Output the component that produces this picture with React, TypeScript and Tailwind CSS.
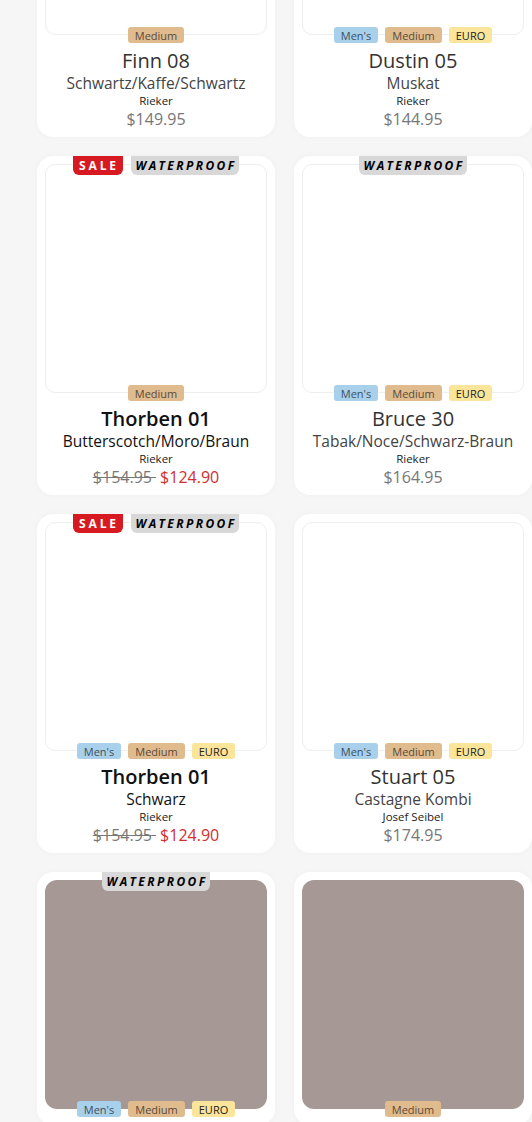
type Tag = "mens" | "medium" | "euro";

type Product = {
  name: string;
  color: string;
  brand: string;
  price: string;
  salePrice?: string;
  tags: Tag[];
  sale?: boolean;
  waterproof?: boolean;
  placeholder?: boolean;
  dark?: boolean;
};

const products: Product[] = [
  { name: "Finn 08", color: "Schwartz/Kaffe/Schwartz", brand: "Rieker", price: "$149.95", tags: ["medium"] },
  { name: "Dustin 05", color: "Muskat", brand: "Rieker", price: "$144.95", tags: ["mens", "medium", "euro"] },
  {
    name: "Thorben 01",
    color: "Butterscotch/Moro/Braun",
    brand: "Rieker",
    price: "$154.95",
    salePrice: "$124.90",
    tags: ["medium"],
    sale: true,
    waterproof: true,
    dark: true,
  },
  { name: "Bruce 30", color: "Tabak/Noce/Schwarz-Braun", brand: "Rieker", price: "$164.95", tags: ["mens", "medium", "euro"], waterproof: true },
  {
    name: "Thorben 01",
    color: "Schwarz",
    brand: "Rieker",
    price: "$154.95",
    salePrice: "$124.90",
    tags: ["mens", "medium", "euro"],
    sale: true,
    waterproof: true,
    dark: true,
  },
  { name: "Stuart 05", color: "Castagne Kombi", brand: "Josef Seibel", price: "$174.95", tags: ["mens", "medium", "euro"] },
  { name: "", color: "", brand: "", price: "", tags: ["mens", "medium", "euro"], waterproof: true, placeholder: true },
  { name: "", color: "", brand: "", price: "", tags: ["medium"], placeholder: true },
];

const tagStyles: Record<Tag, { label: string; cls: string }> = {
  mens: { label: "Men's", cls: "bg-[#a9d0ea] text-[#3d4f5e]" },
  medium: { label: "Medium", cls: "bg-[#e0bb8e] text-[#5a4a3a]" },
  euro: { label: "EURO", cls: "bg-[#fbe59a] text-[#222]" },
};

const ProductCard = ({ p }: { p: Product }) => {
  return (
    <div className="relative bg-white rounded-[16px] p-2 shadow-[0_0_6px_rgba(0,0,0,0.03)] text-center">
      {(p.sale || p.waterproof) && (
        <div className="absolute top-0 left-0 right-0 flex justify-center gap-2 z-10">
          {p.sale && (
            <span className="h-[19px] w-[50px] flex items-center justify-center bg-[#d71a21] text-white text-[12px] font-bold tracking-[0.24em] rounded-b-md pl-[2px]">
              SALE
            </span>
          )}
          {p.waterproof && (
            <span className="h-[19px] w-[108px] flex items-center justify-center bg-[#d8d8d8] text-black text-[12px] font-bold italic tracking-[0.2em] rounded-b-md pl-[2px]">
              WATERPROOF
            </span>
          )}
        </div>
      )}
      {p.placeholder ? (
        <div className="h-[229px] rounded-[12px] bg-[#a69894]" />
      ) : (
        <div className="h-[229px] rounded-[10px] border border-[#eeeeee] bg-white" />
      )}
      <div className="relative -mt-2 flex justify-center gap-[7px]">
        {p.tags.map((t) => (
          <span
            key={t}
            className={`h-4 px-[7px] rounded-[3px] flex items-center text-[11px] leading-none ${tagStyles[t].cls}`}
          >
            {tagStyles[t].label}
          </span>
        ))}
      </div>
      {!p.placeholder && (
        <>
          <div
            className={`mt-[6px] text-[20px] leading-6 ${p.dark ? "text-[#111] font-semibold" : "text-[#333] font-medium"}`}
          >
            {p.name}
          </div>
          <div className={`text-[15.5px] leading-5 ${p.dark ? "text-[#111]" : "text-[#444]"}`}>{p.color}</div>
          <div className="text-[11.5px] leading-[15px] text-[#222]">{p.brand}</div>
          <div className="mt-px text-[16px] leading-5 font-medium">
            {p.salePrice ? (
              <>
                <span className="text-[#777] line-through">{p.price} </span>
                <span className="text-[#d12f2f] ml-[4px]">{p.salePrice}</span>
              </>
            ) : (
              <span className="text-[#777]">{p.price}</span>
            )}
          </div>
        </>
      )}
    </div>
  );
};

export default function App() {
  return (
    <div className="w-[532px] h-[1122px] overflow-hidden bg-[#f6f6f6] font-['Open_Sans',sans-serif]">
      <div className="-mt-[202px] pl-[37px] grid grid-cols-[238px_238px] gap-x-[19px] gap-y-[19px]">
        {products.map((p, i) => (
          <ProductCard key={i} p={p} />
        ))}
      </div>
    </div>
  );
}
